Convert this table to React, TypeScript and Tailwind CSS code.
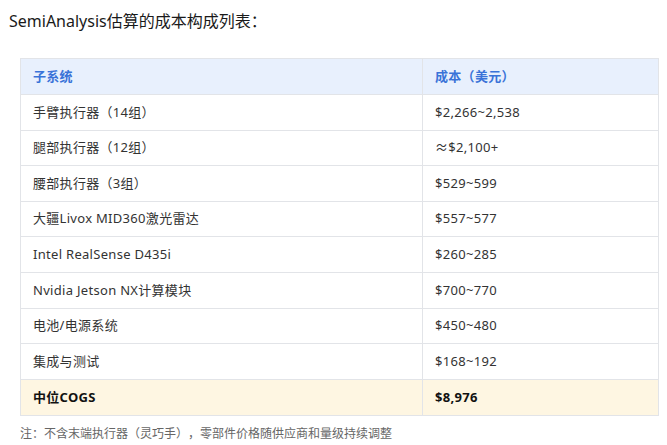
import React from 'react';

const rows: [string, string][] = [
  ['手臂执行器（14组）', '$2,266~2,538'],
  ['腿部执行器（12组）', '≈$2,100+'],
  ['腰部执行器（3组）', '$529~599'],
  ['大疆Livox MID360激光雷达', '$557~577'],
  ['Intel RealSense D435i', '$260~285'],
  ['Nvidia Jetson NX计算模块', '$700~770'],
  ['电池/电源系统', '$450~480'],
  ['集成与测试', '$168~192'],
];

function App() {
  return (
    <div
      className="w-[667px] h-[445px] bg-white overflow-hidden [text-spacing-trim:space-all]"
      style={{ fontFamily: '"Noto Sans", "Noto Sans CJK SC", sans-serif' }}
    >
      <p className="pl-[9px] pt-[9px] text-[16px] leading-[24px] text-[#1a1a1a]">
        SemiAnalysis估算的成本构成列表：
      </p>

      <table className="ml-[20px] mt-[25px] w-[639px] border-collapse text-[13px] text-[#333] tracking-[0.3px]">
        <thead>
          <tr className="h-[36px] bg-[#e8f0fd]">
            <th className="w-[402px] border border-[#e2e4e8] pl-3 text-left font-bold text-[#3a73d8]">子系统</th>
            <th className="border border-[#e2e4e8] pl-3 text-left font-bold text-[#3a73d8]">成本（美元）</th>
          </tr>
        </thead>
        <tbody>
          {rows.map(([name, cost]) => (
            <tr key={name} className="h-[35.6px]">
              <td className="border border-[#e2e4e8] pl-3">{name}</td>
              <td className="border border-[#e2e4e8] pl-3">{cost}</td>
            </tr>
          ))}
          <tr className="h-[36px] bg-[#fef6e2]">
            <td className="border border-[#e2e4e8] pl-3 font-bold text-[#111]">中位COGS</td>
            <td className="border border-[#e2e4e8] pl-3 font-bold text-[#111]">$8,976</td>
          </tr>
        </tbody>
      </table>

      <p className="pl-[20px] pt-[9px] text-[12px] leading-[18px] text-[#666]">
        注：不含末端执行器（灵巧手），零部件价格随供应商和量级持续调整
      </p>
    </div>
  );
}

export default App;
